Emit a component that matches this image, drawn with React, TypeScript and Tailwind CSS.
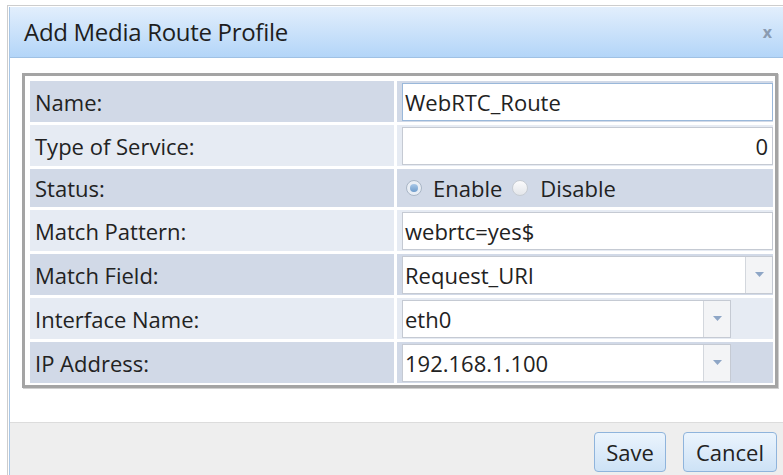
import { useState } from "react";

type Row = {
  label: string;
  kind: "text" | "number" | "radio" | "select" | "selectShort";
  value: string;
  focused?: boolean;
};

const rows: Row[] = [
  { label: "Name:", kind: "text", value: "WebRTC_Route", focused: true },
  { label: "Type of Service:", kind: "number", value: "0" },
  { label: "Status:", kind: "radio", value: "enable" },
  { label: "Match Pattern:", kind: "text", value: "webrtc=yes$" },
  { label: "Match Field:", kind: "select", value: "Request_URI" },
  { label: "Interface Name:", kind: "selectShort", value: "eth0" },
  { label: "IP Address:", kind: "selectShort", value: "192.168.1.100" },
];

function Radio({ checked }: { checked: boolean }) {
  return (
    <span
      className={
        "flex h-[16px] w-[16px] items-center justify-center rounded-full border " +
        (checked
          ? "border-[#a9b6c6] bg-[#e9eef5]"
          : "border-[#c7ccd3] bg-gradient-to-b from-[#fbfbfc] to-[#e3e6ea]")
      }
    >
      {checked && (
        <span className="h-[8px] w-[8px] rounded-full bg-gradient-to-b from-[#a9c8e8] to-[#6f9ccb]" />
      )}
    </span>
  );
}

function SelectBox({ value, short }: { value: string; short?: boolean }) {
  return (
    <div
      className={
        "ml-[5px] flex h-[38px] items-stretch border border-[#c5cad3] bg-white " +
        (short ? "w-[329px]" : "w-[371px]")
      }
    >
      <span className="flex flex-1 items-center pl-[2px]">{value}</span>
      <span className="flex w-[27px] items-center justify-center border-l border-[#d3d7dd] bg-[#f3f4f6]">
        <svg width="9" height="5" viewBox="0 0 9 5">
          <path d="M0 0h9L4.5 5z" fill="#8ea6c6" />
        </svg>
      </span>
    </div>
  );
}

export default function App() {
  const [status, setStatus] = useState(rows[2].value);

  return (
    <div
      className="h-[475px] w-[783px] overflow-hidden bg-white pl-[7px] pt-[5px] text-[22px] leading-none text-[#222]"
      style={{ fontFamily: '"Open Sans", "Noto Sans", sans-serif' }}
    >
      <div className="w-[790px] border border-[#cdcdcd] bg-white p-px">
        <div className="border-x border-[#a9c7e6]">
          {/* title bar */}
          <div className="flex h-[51px] items-center justify-between border-b border-[#9fc1e4] bg-gradient-to-b from-[#e2eefc] to-[#b3d5f8] pl-[14px] pr-[22px]">
            <span className="text-[24px] tracking-[-0.3px] text-[#1e1e1e]">Add Media Route Profile</span>
            <span className="text-[16px] font-bold text-[#8a9bb1]">x</span>
          </div>

          {/* form body */}
          <div className="h-[364px] pl-[12px] pt-[15px]">
            <div className="w-[756px] border-[3px] border-[#a4a4a4] bg-white pb-[2px] pl-[5px] pr-[2px] pt-[5px] shadow-[1px_1px_0_#d0d0d0]">
              <div className="grid grid-cols-[364px_376px] gap-[3px]">
                {rows.map((row, i) => {
                  const bg = i % 2 === 0 ? "bg-[#d1d9e7]" : "bg-[#e6ebf3]";
                  const h = row.kind === "radio" ? "h-[38px]" : "h-[41px]";
                  return (
                    <div key={row.label} className="contents">
                      <div className={`flex items-center pl-[5px] ${bg} ${h}`}>{row.label}</div>
                      <div className={`flex items-center ${bg} ${h}`}>
                        {row.kind === "text" && (
                          <div
                            className={
                              "ml-[5px] flex h-[38px] w-[371px] items-center border bg-white pl-[2px] " +
                              (row.focused ? "border-[#9ab8da]" : "border-[#c5cad3]")
                            }
                          >
                            {row.value}
                          </div>
                        )}
                        {row.kind === "number" && (
                          <div className="ml-[5px] flex h-[38px] w-[371px] items-center justify-end border border-[#c5cad3] bg-white pr-[4px]">
                            {row.value}
                          </div>
                        )}
                        {row.kind === "radio" && (
                          <div className="ml-[9px] flex items-center">
                            <button
                              type="button"
                              onClick={() => setStatus("enable")}
                              className="flex items-center gap-[11px]"
                            >
                              <Radio checked={status === "enable"} />
                              <span>Enable</span>
                            </button>
                            <button
                              type="button"
                              onClick={() => setStatus("disable")}
                              className="ml-[10px] flex items-center gap-[12px]"
                            >
                              <Radio checked={status === "disable"} />
                              <span>Disable</span>
                            </button>
                          </div>
                        )}
                        {row.kind === "select" && <SelectBox value={row.value} />}
                        {row.kind === "selectShort" && <SelectBox value={row.value} short />}
                      </div>
                    </div>
                  );
                })}
              </div>
            </div>
          </div>

          {/* footer */}
          <div className="flex h-[60px] items-start justify-end gap-[17px] border-t border-[#dcdcdc] bg-[#eeeeee] pr-[17px] pt-[9px]">
            <button
              type="button"
              className="h-[40px] w-[72px] rounded-[4px] border border-[#8fb4dc] bg-gradient-to-b from-[#ebf4fd] to-[#cde2f6] text-[#222]"
            >
              Save
            </button>
            <button
              type="button"
              className="h-[40px] w-[94px] rounded-[4px] border border-[#8fb4dc] bg-gradient-to-b from-[#ebf4fd] to-[#cde2f6] text-[#222]"
            >
              Cancel
            </button>
          </div>
        </div>
      </div>
    </div>
  );
}
